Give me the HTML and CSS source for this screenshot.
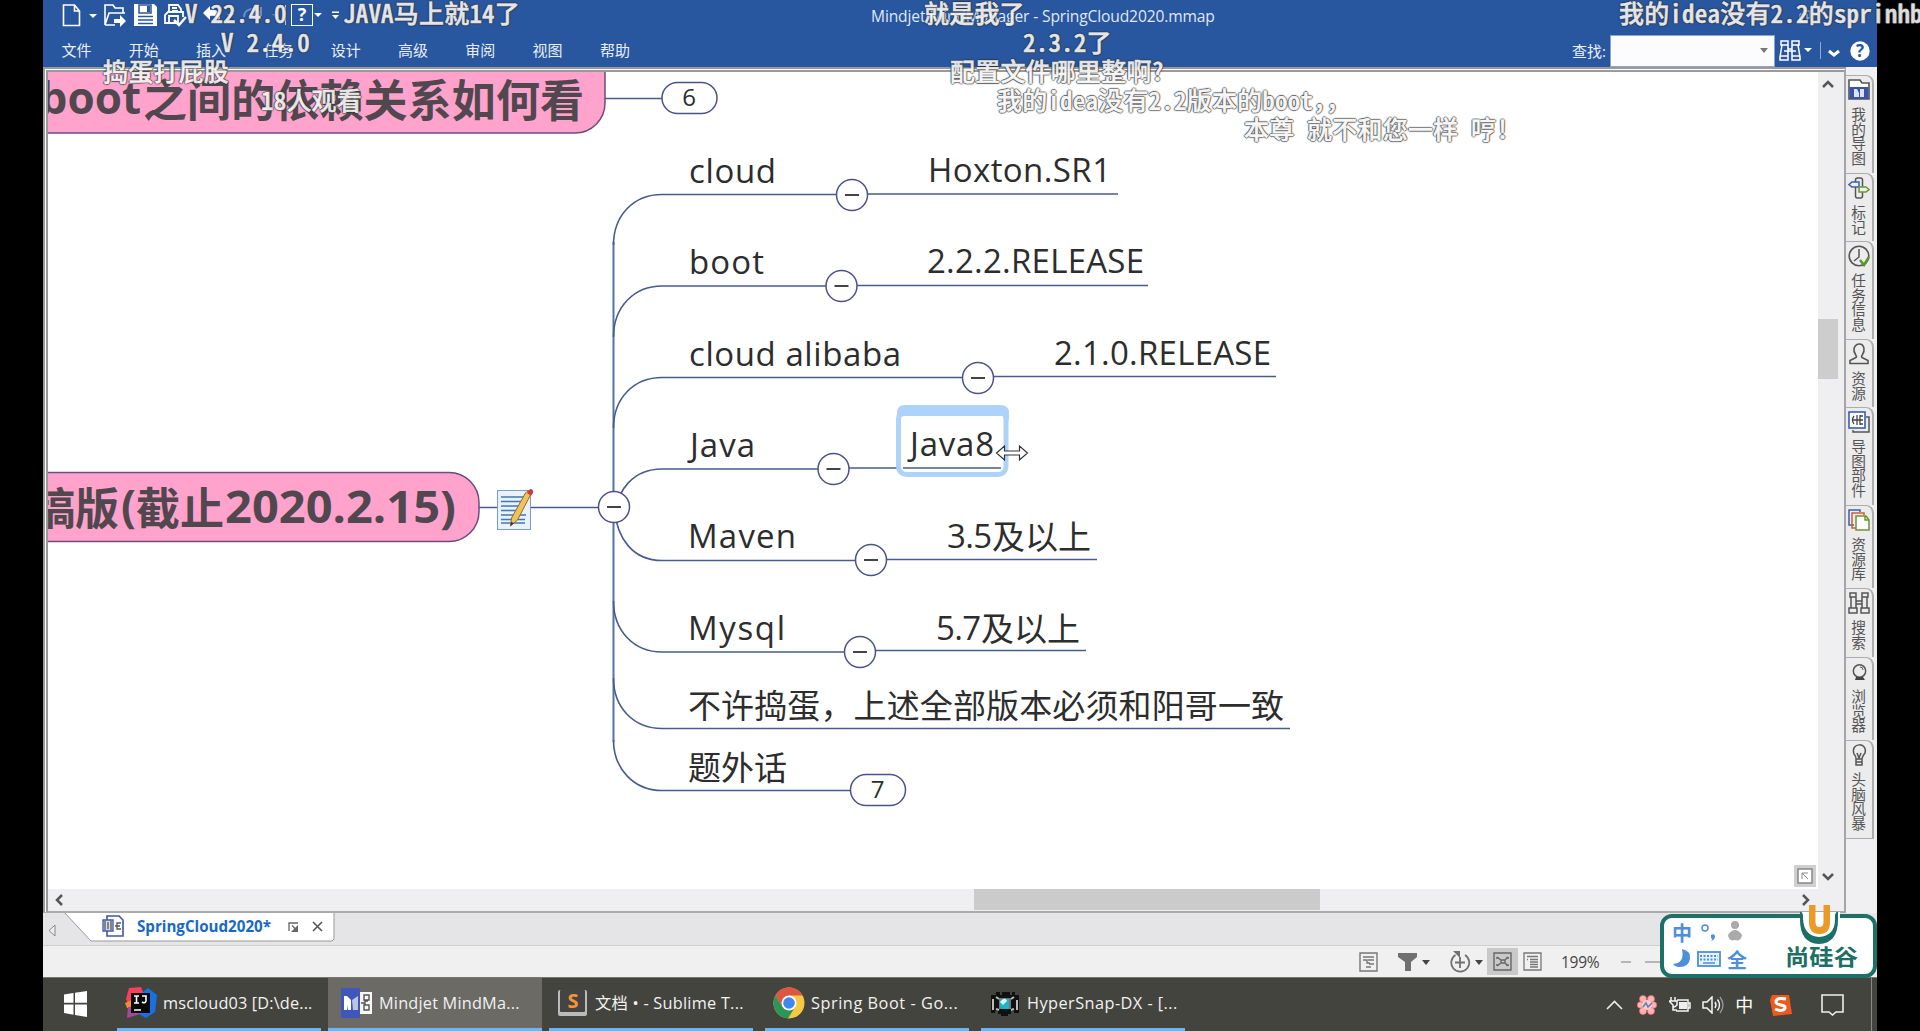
FILE: index.html
```html
<!DOCTYPE html>
<html lang="zh-CN">
<head>
<meta charset="utf-8">
<title>SpringCloud2020.mmap</title>
<link rel="stylesheet" href="styles.css">
</head>
<body>
<div class="screen">
<div class="app">
  <header class="ribbon">
    <div class="titlebar">
      <div class="quick">
        <svg class="q-new" width="36" height="24" viewBox="0 0 36 24"><path d="M1.500 2h11l5 6v14.500h-16zM12.500 2v6h5" fill="none" stroke="#fff" stroke-width="1.600"/><path d="M27 11h8l-4 4z" fill="#fff"/></svg>
        <svg class="q-open" width="24" height="24" viewBox="0 0 24 24"><path d="M1 22V2h8l2 3h8v5M1 22l4-12h16M1 22h10" fill="none" stroke="#fff" stroke-width="1.600"/><path d="M10 16h6v-4l6 6-6 6v-4h-6z" fill="#fff"/></svg>
        <svg class="q-save" width="23" height="24" viewBox="0 0 23 24"><path d="M0 1h20l3 3v19H0z" fill="#fff"/><path d="M5 2h12v8H5zM4 13.500h15M4 17h15M4 20.500h15" fill="none" stroke="#28569f" stroke-width="1.500"/><path d="M13 3h3v6h-3z" fill="#28569f"/></svg>
        <svg class="q-print" width="24" height="24" viewBox="0 0 24 24"><path d="M5 9V2h9l3 4v3M1 21V12l3-3h15v5M1 20h8M5 13h9v7H5zM8 5h5M8 8h6" fill="none" stroke="#fff" stroke-width="1.800"/><path d="M10 17l5 5 7-8" fill="none" stroke="#fff" stroke-width="2.500"/></svg>
        <svg class="q-undo" width="82" height="24" viewBox="0 0 82 24"><path d="M1 10l7-7v4c8-1 12 4 9 11-2-5-5-6-9-5v4z" fill="#fff"/><path d="M25 11h7l-3.500 4z" fill="#a9bbd8"/><path d="M42 14c0-9 12-11 17-2M59 4v8h-8" fill="none" stroke="#6f8fc3" stroke-width="2"/><path d="M70 11h7l-3.500 4z" fill="#6f8fc3"/></svg>
        <i class="q-sep"></i>
        <span class="q-help">?</span>
        <svg class="q-more" width="26" height="24" viewBox="0 0 26 24"><path d="M0 10h8l-4 4zM18 12h7l-3.500 4zM18 8.500h7v1.500h-7z" fill="#fff"/></svg>
      </div>
      <div class="title">Mindjet MindManager - SpringCloud2020.mmap</div>
      <svg class="winbtn" width="12" height="12" viewBox="0 0 12 12"><path d="M1 4h7v7H1zM4 4V1h7v7H8" fill="none" stroke="#b8c8e2"/></svg>
    </div>
    <div class="menubar">
      <nav><a>文件</a><a>开始</a><a>插入</a><a>任务</a><a>设计</a><a>高级</a><a>审阅</a><a>视图</a><a>帮助</a></nav>
      <label>查找:</label>
      <div class="search"><svg width="8" height="5"><path d="M0 0h8L4 5z" fill="#777"/></svg></div>
      <svg class="find" width="104" height="24" viewBox="0 0 104 24"><g fill="none" stroke="#fff" stroke-width="1.500"><path d="M3 2h7v4H3zM14 2h7v4h-7zM4 6L2 18v3h8V10h4v11h8v-3L20 6M2 17h8M14 17h8M10 6v5M14 6v5M6 12h12"/></g><path d="M26 9h8l-4 4z" fill="#fff"/><path d="M42.500 3v17" stroke="#8fa9d2"/><path d="M51 12l5 4 5-4" fill="none" stroke="#fff" stroke-width="3"/><circle cx="82" cy="12" r="9.700" fill="#fff"/><text x="82" y="18" text-anchor="middle" class="helpmark">?</text></svg>
    </div>
  </header>

  <main class="work">
    <section class="doc">
      <div class="viewport">
        <svg class="map" width="1770" height="817" viewBox="48 72 1770 817">
          <g class="topic">
            <rect x="-60" y="40" width="665" height="93" rx="30"/>
            <rect x="-60" y="472.500" width="539" height="69" rx="30"/>
          </g>
          <g class="topic-text">
            <text x="141" y="113.500" text-anchor="end" class="latin-b">boot</text>
            <text x="143" y="117" textLength="441">之间的依赖关系如何看</text>
            <text x="31" y="525" textLength="88">稿版</text>
            <text x="121" y="522" class="latin-b">(</text>
            <text x="136" y="525" textLength="88">截止</text>
            <text x="225" y="522.500" class="latin-b" textLength="231" lengthAdjust="spacingAndGlyphs">2020.2.15)</text>
          </g>
          <g class="links">
            <path d="M605 98.500h57M479 507.500h135"/>
            <path class="spine" d="M613.500 242V742"/>
            <path d="M613.500 245C613.500 215 634 194.500 662 194.500H836M868 194H1118"/>
            <path d="M613.500 337C613.500 307 634 286 662 286H826M857 285.500H1148"/>
            <path d="M613.500 428C613.500 398 634 377.500 662 377.500H963M993 376.500H1276"/>
            <path d="M614 520C616 489 634 469 662 469H818M849 468H897M903 468H1001"/>
            <path d="M614 505C616 540 634 560.500 662 560.500H856M887 559.500H1097"/>
            <path d="M613.500 601C613.500 631 634 652 662 652H845M876 650.500H1086"/>
            <path d="M613.500 678C613.500 708 634 728.500 662 728.500H1290"/>
            <path d="M613.500 740C613.500 769 634 790.500 662 790.500H850"/>
          </g>
          <rect x="898.500" y="411" width="107.500" height="63.500" rx="8" fill="none" stroke="#add3fb" stroke-width="5"/>
          <path d="M897 417v-4q0-8 8-8h95q9 0 9 8v8q-1-5-6-5h-98q-5 0-7 5z" fill="#add3fb"/>
          <g class="knobs">
            <circle cx="852" cy="195" r="15.500"/><circle cx="841.500" cy="286" r="15.500"/><circle cx="978" cy="378" r="15.500"/><circle cx="833.500" cy="469" r="15.500"/><circle cx="871" cy="560" r="15.500"/><circle cx="860" cy="652" r="15.500"/><circle cx="614" cy="507" r="15.500"/>
            <rect x="662" y="82.500" width="55" height="31" rx="15.500"/><rect x="850.500" y="774.500" width="55" height="31" rx="15.500"/>
          </g>
          <path class="minus" d="M845 195h14M834.500 286h14M971 378h14M826.500 469h14M864 560h14M853 652h14M607 507h14"/>
          <g class="label">
            <text x="689" y="182.500" textLength="87">cloud</text><text x="928" y="181.500" textLength="183">Hoxton.SR1</text>
            <text x="689" y="274" textLength="75">boot</text><text x="927" y="273" textLength="217">2.2.2.RELEASE</text>
            <text x="689" y="365.500" textLength="212">cloud alibaba</text><text x="1054" y="364.500" textLength="217">2.1.0.RELEASE</text>
            <text x="690" y="457" textLength="65">Java</text><text x="910" y="456" textLength="84">Java8</text>
            <text x="688" y="548" textLength="108">Maven</text><text x="947" y="547.500" textLength="45">3.5</text><text x="992" y="549" textLength="99">及以上</text>
            <text x="688" y="639.500" textLength="97">Mysql</text><text x="936" y="639.500" textLength="45">5.7</text><text x="981" y="640.500" textLength="99">及以上</text>
            <text x="688" y="718" textLength="596">不许捣蛋，上述全部版本必须和阳哥一致</text>
            <text x="688" y="780" textLength="99">题外话</text>
            <text class="count" x="689" y="106" text-anchor="middle">6</text><text class="count" x="877.500" y="798" text-anchor="middle">7</text>
          </g>
          <g><rect x="497.500" y="490.500" width="33" height="39" fill="#e9f1fa" stroke="#7c9cc8"/><path d="M501 497h25M501 501.500h23M501 506h21M501 510.500h20M501 515h25M501 519.500h24M501 523h24" stroke="#3f78b7" stroke-width="1.500"/><path d="M510.500 526l1-8 14-25q3-4 6 0l-14 27z" fill="#f0c25c" stroke="#8f6a2a"/><path d="M527 493l3-4q4 0 3 4l-2 3z" fill="#c6413a"/><path d="M510.500 526l.5-4 3 1z" fill="#333"/></g>
          <path d="M996.500 453l8-7v5h15v-5l8 7-8 7v-5h-15v5z" fill="#fff" stroke="#333" stroke-width="1.200"/>
        </svg>
        <div class="vscroll">
          <svg width="12" height="8" viewBox="0 0 12 8"><path d="M1 7l5-5 5 5" fill="none" stroke="#555" stroke-width="2.500"/></svg>
          <div class="vthumb"></div>
          <svg class="down" width="12" height="8" viewBox="0 0 12 8"><path d="M1 1l5 5 5-5" fill="none" stroke="#555" stroke-width="2.500"/></svg>
        </div>
        <svg class="corner" width="22" height="22" viewBox="0 0 22 22"><path d="M0 0h22v22H0z" fill="#cfcfcf"/><path d="M4 4h14v14H4z" fill="#fff" stroke="#888" stroke-width="1.500"/><path d="M8 14V8h6M8 8l6 6" fill="none" stroke="#888"/></svg>
      </div>
      <div class="hscroll">
        <svg width="8" height="12" viewBox="0 0 8 12"><path d="M7 1L2 6l5 5" fill="none" stroke="#555" stroke-width="2.500"/></svg>
        <div class="hthumb"></div>
        <svg class="hright" width="8" height="12" viewBox="0 0 8 12"><path d="M1 1l5 5-5 5" fill="none" stroke="#555" stroke-width="2.500"/></svg>
      </div>
    </section>
    <aside class="side">
      <div class="stab"><svg viewBox="0 0 22 22"><path d="M1 20V1h11l2 3h7v16z" fill="#fff" stroke="#555" stroke-width="1.600"/><path d="M1.500 8h19v12h-19z" fill="#3c51a8"/><path d="M6 10h3l2 4v4H6zM12 10h4v8h-4z" fill="#dde3f5"/></svg><span>我的导图</span></div>
      <div class="stab"><svg viewBox="0 0 22 22"><rect x="7.500" y="1" width="7" height="20" rx="2" fill="none" stroke="#555" stroke-width="1.500"/><path d="M1 7.500l3-2.500h7v5H4z" fill="#eee" stroke="#3760ae" stroke-width="1.500"/><path d="M21 12.500l-3-2.500h-7v5h7z" fill="#eee" stroke="#6b972f" stroke-width="1.500"/></svg><span>标记</span></div>
      <div class="stab"><svg viewBox="0 0 22 22"><circle cx="11" cy="11" r="9.800" fill="none" stroke="#555" stroke-width="1.600"/><path d="M11 4v8l-5 4" fill="none" stroke="#555" stroke-width="1.500"/><path d="M12 15l4 5 5-8" fill="none" stroke="#5d9428" stroke-width="2.500"/></svg><span>任务信息</span></div>
      <div class="stab"><svg viewBox="0 0 22 22"><path d="M2 20.500v-3l6-3c2-1-3-4-2-9 2-6 9-6 10 0 1 5-4 8-2 9l6 3v3z" fill="none" stroke="#555" stroke-width="1.600"/></svg><span>资源</span></div>
      <div class="stab"><svg viewBox="0 0 22 22"><path d="M5 19v2h16V6h-3" fill="none" stroke="#555" stroke-width="1.500"/><rect x="1" y="1" width="16" height="16" fill="#fff" stroke="#3760ae" stroke-width="1.600"/><path d="M9 4v10M12 4v10M6 5q-3 4 0 8M12 5h3M12 9h3M12 13h3M5 9h7" fill="none" stroke="#444" stroke-width="1.300"/></svg><span>导图部件</span></div>
      <div class="stab"><svg viewBox="0 0 22 22"><path d="M6 16H1V1h11v2" fill="none" stroke="#3760ae" stroke-width="1.500"/><path d="M8 19H4V4h12v2" fill="none" stroke="#d85b37" stroke-width="1.500"/><path d="M8 7h10l3 4v10H8zM17 7v4h4" fill="#fff" stroke="#6b972f" stroke-width="1.500"/></svg><span>资源库</span></div>
      <div class="stab"><svg viewBox="0 0 22 22"><path d="M2 1h6v4H2zM14 1h6v4h-6zM3 5v11M8 5v11M14 5v11M19 5v11M1 16h8v5H1zM13 16h8v5h-8zM8 9h6M8 12h6" fill="none" stroke="#555" stroke-width="1.500"/></svg><span>搜索</span></div>
      <div class="stab"><svg viewBox="0 0 22 22"><circle cx="11.500" cy="10" r="6.200" fill="none" stroke="#555" stroke-width="1.500"/><path d="M12 6q3 0 3 3" fill="none" stroke="#555"/><path d="M8 16h7l2 3H7z" fill="#444"/></svg><span>浏览器</span></div>
      <div class="stab"><svg viewBox="0 0 22 22"><path d="M8 15q0-3-2-5c-4-12 14-12 11-1q-3 4-3 6M8 15h6v6H8zM8 18h6M9 9l2 5 2-5" fill="none" stroke="#555" stroke-width="1.500"/></svg><span>头脑风暴</span></div>
    </aside>
  </main>

  <div class="doctabs">
    <svg class="doctab-shape" width="300" height="32" viewBox="0 0 300 32"><path d="M21 -1L48 28H289L291 26V-1z" fill="#fff" stroke="#999"/><path d="M12 12v11l-6-5.500z" fill="#eee" stroke="#888"/><path d="M64 3h12l4 4v16H64z" fill="#fff" stroke="#4055a6" stroke-width="1.600"/><path d="M60 7h10v11H60z" fill="#d8dcec" stroke="#4055a6" stroke-width="1.300"/><path d="M62 8v9M65 9v7M68 8v9M78 10h-4v6h4M72 13h5" fill="none" stroke="#555" stroke-width="1.300"/><path d="M246 18v-8h9M249 12.500l5 5" fill="none" stroke="#666" stroke-width="1.300"/><path d="M255 12v7h-7z" fill="#666"/><path d="M270 9l9 9M279 9l-9 9" stroke="#555" stroke-width="1.600"/><text x="94" y="19" textLength="134" lengthAdjust="spacingAndGlyphs" class="doctab-name">SpringCloud2020*</text></svg>
  </div>

  <footer class="status">
    <svg width="19" height="20" viewBox="0 0 19 20"><path d="M1 1h17v18H1zM4 5h11M4 8h4v3h3M9 8h6M10 12h5M7 15h5" fill="none" stroke="#777" stroke-width="1.400"/></svg>
    <svg class="s-filter" width="32" height="20" viewBox="0 0 32 20"><path d="M0 1h19v4l-6 5v9H7v-9L0 5z" fill="#707070"/><path d="M24 8h8l-4 5z" fill="#444"/></svg>
    <svg class="s-target" width="33" height="22" viewBox="0 0 33 22"><path d="M5.500 4a9 9 0 1 0 9.500 0M10 6v11M5 11.500h10" fill="none" stroke="#707070" stroke-width="1.800"/><path d="M3 0h7v7z" fill="#707070"/><path d="M25 9h8l-4 5z" fill="#444"/></svg>
    <div class="s-active"><svg width="19" height="19" viewBox="0 0 19 19"><path d="M1 1h17v17H1zM4 5l4 3h4l3-3M4 14l4-3h4l3 3M3 6h3M3 13h3M13 6h3M13 13h3M8 8v3h4V8z" fill="none" stroke="#666" stroke-width="1.400"/></svg></div>
    <svg class="s-list" width="19" height="19" viewBox="0 0 19 19"><path d="M1 1h17v17H1zM4 4.500h11M7 7.500h8M7 10h8M7 12.500h8M7 15h8M4 7.500h1" fill="none" stroke="#777" stroke-width="1.300"/></svg>
    <span class="zoom">199%</span>
    <i class="dash"></i><i class="dash wide"></i>
  </footer>

  <div class="taskbar">
    <svg class="start" width="23" height="26" viewBox="0 0 23 22" preserveAspectRatio="none"><path d="M0 3l9.500-1.300V10H0zM11 1.500L23 0v10H11zM0 11.500h9.500V20L0 18.700zM11 11.500h12V22l-12-1.700z" fill="#fff"/></svg>
    <div class="task t1"><svg width="32" height="32" viewBox="0 0 32 32"><path d="M4 1l12-1 5 12L5 22 1 12z" fill="#f5405e"/><path d="M0 16l9-4v10l-7-1z" fill="#f68b2c"/><path d="M18 5l5-4 9 7-2 17-9 6-9-5z" fill="#1672e3"/><path d="M3 20l-1 11 13-4-4-8z" fill="#a04a9b"/><path d="M6 6h19v20H6z" fill="#080808"/><path d="M9 9h5M11.500 9v7M9 16h5M17 9h4v5q-1 3-4 1M9 23h7" fill="none" stroke="#fff" stroke-width="1.600"/></svg><span>mscloud03 [D:\de...</span></div>
    <div class="task t2 on"><svg width="32" height="32" viewBox="0 0 32 32"><path d="M0 1h19v30H0z" fill="#3e57b8"/><path d="M19 5h12v22H19z" fill="#f7f7fa"/><path d="M3 9h3l4 4v10H7v-5l-1 5H3z" fill="#fff"/><path d="M11 13l6-4v14h-5z" fill="#bdc4df"/><path d="M23 8h5v5h-5zM23 18h5v5h-5zM20 16h4v-2h3M24 16v2" fill="none" stroke="#555" stroke-width="1.400"/></svg><span>Mindjet MindMa...</span></div>
    <div class="task t3"><svg width="32" height="32" viewBox="0 0 32 32"><rect x="1" y="3" width="29" height="26" rx="2" fill="#bbb"/><rect x="3" y="3" width="25" height="22" rx="1" fill="#444"/><text x="16" y="21" text-anchor="middle" class="subl">S</text></svg><span>文档 • - Sublime T...</span></div>
    <div class="task t4"><svg width="32" height="32" viewBox="0 0 32 32"><circle cx="16" cy="16" r="15.500" fill="#f6c944"/><path d="M2.600 8.200A15.500 15.500 0 0 1 29.500 8.500H16L9.500 20z" fill="#df5543"/><path d="M2.600 8.200A15.500 15.500 0 0 0 15 31.500l7-11.500-12.500 0z" fill="#2c9658"/><circle cx="16" cy="16" r="7.500" fill="#fff"/><circle cx="16" cy="16" r="5.800" fill="#4286ef"/></svg><span>Spring Boot - Go...</span></div>
    <div class="task t5"><svg width="32" height="32" viewBox="0 0 32 32"><path d="M2 8h5V5h4v3h2V5h8v3h2V5h3v3h4v18h-5v-2h-3v3h-3v2h-7v-2h-3v-3h-3v2H2z" fill="#111"/><path d="M4 12v11M7 10l3 2M25 10l-3 2M28 13v10M7 22l3 1M25 22l-3 1" stroke="#bbb" stroke-width="2" fill="none"/><path d="M10 11h12v11H10z" fill="#777"/><path d="M11 12h9v10h-7l-2-2z" fill="#19b5cc"/><path d="M11 15q5-6 7-1l-4 4z" fill="#dcfcff"/></svg><span>HyperSnap-DX - [...</span></div>
    <div class="tray">
      <svg width="17" height="10" viewBox="0 0 17 10"><path d="M1 9l7.500-7.500L16 9" fill="none" stroke="#eee" stroke-width="1.600"/></svg>
      <svg width="20" height="20" viewBox="0 0 20 20"><g fill="#ffb4b4" stroke="#e66a6a" stroke-width=".7"><circle cx="6" cy="4" r="3.500"/><circle cx="14" cy="4" r="3.500"/><circle cx="3.500" cy="10" r="3.200"/><circle cx="16.500" cy="10" r="3.200"/><circle cx="6" cy="16" r="3.500"/><circle cx="14" cy="16" r="3.500"/></g><circle cx="10" cy="10" r="5" fill="#ffc9c9"/><path d="M6 12l3-4 2 4 4-4" fill="none" stroke="#4c83c0" stroke-width="1.500"/></svg>
      <svg width="22" height="18" viewBox="0 0 22 18"><path d="M2 1v4M6 1v4M0 5h8v4q-4 4-4 0zM4 9v5h4M8 4h11v11H7M19 7h2v5h-2" fill="none" stroke="#f5f5f5" stroke-width="1.500"/><path d="M10 6h8v7h-8z" fill="#eee"/></svg>
      <svg width="22" height="18" viewBox="0 0 22 18"><path d="M1 6h4l5-5v16l-5-5H1z" fill="none" stroke="#f5f5f5" stroke-width="1.500"/><path d="M13 6q2 3 0 6M15.500 3.500q4 5.500 0 11" fill="none" stroke="#f5f5f5" stroke-width="1.400"/><path d="M18 1q6 8 0 16" fill="none" stroke="#999" stroke-width="1.300"/></svg>
      <span class="lang">中</span>
      <svg width="22" height="22" viewBox="0 0 22 22"><path d="M2 1l17 0 3 19-19 2-3-16z" fill="#ee5a1c"/><path d="M16 5Q6 3 6 8c0 4 10 2 9 6-1 3-6 3-10 1" fill="none" stroke="#fff" stroke-width="3"/></svg>
      <svg width="23" height="22" viewBox="0 0 23 22"><path d="M1 1h21v17h-7l-3.500 3L8 18H1z" fill="none" stroke="#eee" stroke-width="1.600"/></svg>
      <i class="peek"></i>
    </div>
  </div>
</div>

<div class="ime">
  <svg width="217" height="74" viewBox="0 0 217 74">
    <rect x="2" y="12" width="213" height="60" rx="10" fill="#fff" stroke="#1c7065" stroke-width="4"/>
    <path d="M140 8v9q0 24 19 24t21-24V8z" fill="#fff"/><path d="M140 8v8q0 23 19 24 19-1 19-24V8q-2-1-3 3v4q0 17-16 18-15-1-16-18v-4q-1-4-3-3z" fill="#1c7065"/><path d="M149 1v17q0 12 10.500 12T170 18V1h-6.500v17q0 5-4 5t-4-5V1z" fill="#eb9a27"/>
    <g class="ime-b"><text x="12" y="37">中</text><text x="67" y="64">全</text></g>
    <circle cx="45" cy="24" r="3" fill="none" stroke="#4d8fd8" stroke-width="1.500"/><path d="M51 31q3-2 4 1 0 4-4 5 2-2 0-3z" fill="#4d8fd8"/>
    <path d="M22 45q9 2 8 10-2 9-12 8-4-1-5-3 12-1 9-15z" fill="#4d8fd8"/>
    <rect x="38" y="48" width="22" height="14" fill="#e9f3fd" stroke="#4d8fd8" stroke-width="1.800"/><path d="M40 52h18M40 55.500h18" stroke="#4d8fd8" stroke-width="1.800" stroke-dasharray="2 1.500"/><path d="M43 59h12" stroke="#4d8fd8" stroke-width="1.500"/>
    <circle cx="75" cy="21" r="4" fill="#aaa"/><path d="M68 31q7-10 14 0-1 7-7 5-6 2-7-5z" fill="#aaa"/>
    <text x="125" y="61" class="brand" textLength="73" lengthAdjust="spacingAndGlyphs">尚硅谷</text>
  </svg>
</div>

<div class="danmaku">
  <p class="d1">V 22.4.0</p><p class="d2">JAVA马上就14了</p><p class="d3">V 2.4.0</p><p class="d4">捣蛋打屁股</p><p class="d5">18人观看</p>
  <p class="d6">就是我了</p><p class="d7">2.3.2了</p><p class="d8">配置文件哪里整啊?</p><p class="d9">我的idea没有2.2版本的boot<span>，，</span></p><p class="d10">本尊 就不和您一样 哼!</p>
  <p class="d11">我的idea没有2.2的sprinhboot</p>
</div>
</div>
</body>
</html>
```
FILE: styles.css
```css
* { box-sizing: border-box; }
body { margin: 0; background: #000; font-family: "Open Sans", "Noto Sans CJK SC", sans-serif; overflow: hidden; }
svg { display: block; flex: none; }
.screen { position: relative; width: 1920px; height: 1031px; padding: 0 43px; overflow: hidden; }
.app { display: flex; flex-direction: column; height: 1031px; background: #f0f0f0; }

/* ribbon */
.ribbon { height: 67px; background: #28569f; color: #fff; flex: none; }
.titlebar { display: flex; height: 34px; align-items: flex-start; }
.quick { display: flex; align-items: center; width: 828px; padding: 3px 0 0 19px; }
.q-open { margin-left: 6px; }
.q-save { margin-left: 6px; }
.q-print { margin-left: 7px; }
.q-undo { margin-left: 14px; }
.q-sep { width: 1px; height: 20px; margin-left: 1px; background: #b8c8e2; }
.q-help { width: 22px; height: 22px; margin-left: 5px; border: 1.5px solid #fff; font: bold 18px/19px "Open Sans", sans-serif; text-align: center; }
.q-more { margin-left: 1px; }
.title { width: 343px; font-size: 15.6px; letter-spacing: -.14px; line-height: 32px; white-space: nowrap; color: #dfe8f6; }
.winbtn { margin: 10px 0 0 585px; }
.menubar { display: flex; height: 33px; align-items: center; }
nav { display: flex; width: 1529px; padding-left: 18.500px; }
nav a { width: 67.300px; font-size: 15px; line-height: 33px; color: #e8eefa; }
.menubar label { width: 38px; margin-right: 0; font-size: 15px; color: #e8eefa; white-space: nowrap; }
nav, .menubar label, .search, .find { flex: none; }
.search { display: flex; align-items: center; justify-content: flex-end; width: 165px; height: 32px; padding-right: 6px; background: #fcfcff; border: 1px solid #8aa5cf; }
.find { margin-left: 3px; }
.helpmark { font: bold 17px "Open Sans", sans-serif; fill: #28569f; }

/* workspace */
.work { display: flex; height: 846px; flex: none; }
.doc { width: 1803px; border: solid; border-width: 5px 2px 2px 5px; border-style: double solid solid double; border-color: #9a9a9c #a5a5a8 #aaa #9a9a9c; background: #fff; }
.viewport { position: relative; display: flex; height: 817px; background: #fff; }
.vscroll { display: flex; flex-direction: column; align-items: center; width: 26px; height: 817px; padding: 8px 6px 8px 0; background: #efeef0; }
.vthumb { width: 20px; height: 60px; margin-top: 231px; background: #cdcdcd; }
.down { margin-top: auto; }
.corner { position: absolute; left: 1746px; top: 793px; }
.hscroll { display: flex; align-items: center; height: 22px; padding: 0 0 1px 7px; background: #efeef0; }
.hthumb { width: 346px; height: 21px; margin-left: 911px; background: #cbcbcb; }
.hright { margin-left: 482px; }
.side { width: 31px; padding-top: 8px; background: #f0f0f2; }
.stab { position: relative; width: 28px; padding: 3px 0 7px; border: 1px solid #adadaf; border-width: 1px 2px 0 0; border-top-right-radius: 8px; background: #ececed; }
.stab:last-child { border-bottom-width: 1.500px; }
.stab svg { width: 22px; height: 22px; margin: 0 2px 6px; }
.stab span { display: block; width: 17px; margin-left: 3px; font-size: 14.700px; line-height: 17px; writing-mode: vertical-rl; text-orientation: upright; color: #555; }

/* map */
.topic rect { fill: #ffa3cc; stroke: #6d4b82; stroke-width: 1.500; }
.topic-text { font: bold 44px "Noto Sans CJK SC", sans-serif; fill: #50484e; }
.latin-b { font: bold 44px "Open Sans", sans-serif; }
.links path { fill: none; stroke: #475c8c; stroke-width: 1.600; }
.links .spine { stroke: #5474a8; stroke-width: 2; }
.knobs { fill: #fff; stroke: #4d5188; stroke-width: 1.500; }
.minus { stroke: #444; stroke-width: 2; }
.label { font: 33px "Open Sans", "Noto Sans CJK SC", sans-serif; fill: #2d2d2d; }
.count { font-size: 24px; }

/* document tab and status */
.doctabs { height: 33px; background: #e5e5e7; border-bottom: 1px solid #cfcfcf; flex: none; }
.doctab-name { font: bold 15.500px "Open Sans", sans-serif; fill: #1668c8; }
.status { display: flex; align-items: center; height: 31px; padding-left: 1316px; background: #f0f0f0; flex: none; }
.s-filter { margin-left: 20px; }
.s-target { margin-left: 20px; }
.s-active { display: flex; align-items: center; justify-content: center; width: 31px; height: 27px; margin-left: 4px; background: #c9c9c9; }
.s-list { margin-left: 5px; }
.zoom { width: 60px; margin-left: 19px; font-size: 15.500px; letter-spacing: -.3px; color: #444; }
.dash { width: 10px; height: 2px; background: #b5b5b5; }
.wide { width: 30px; margin-left: 14px; }

/* taskbar */
.taskbar { position: relative; display: flex; height: 54px; background: #44443e; border-top: 1px solid #777770; flex: none; }
.start { margin: 13px 30px 0 21px; }
.task { display: flex; align-items: center; flex: none; width: 204px; height: 53px; margin-right: 12px; padding-left: 8px; border-bottom: 3px solid #72b4ea; color: #f2f2f2; font-size: 16.300px; white-space: nowrap; }
.task span { margin-left: 6px; line-height: 48px; }
.t1 { margin-right: 7px; letter-spacing: .15px; }
.t2 { width: 214px; margin-right: 7px; padding-left: 13px; background: #6b6a65; letter-spacing: .2px; }
.t3 { letter-spacing: .25px; }
.t4 { letter-spacing: .55px; }
.t5 { letter-spacing: .45px; }
.subl { font: bold 20px "Open Sans", sans-serif; fill: #f79433; letter-spacing: 0; }
.tray { display: flex; align-items: center; margin-left: 409px; gap: 11.300px; }
.tray svg:nth-child(1) { margin-right: 3px; }
.lang { width: 18px; font-size: 18px; line-height: 24px; color: #fff; }
.tray .lang + svg { margin: 0 17px 0 6px; }
.peek { width: 1px; height: 53px; margin-left: 16px; background: #888; }

/* floating input bar */
.ime { position: absolute; left: 1660px; top: 904px; }
.ime-b { font: bold 20px "Noto Sans CJK SC", sans-serif; fill: #4d8fd8; }
.brand { font: bold 22px "Noto Sans CJK SC", sans-serif; fill: #1c7065; }

/* live comments drifting over the picture */
.danmaku p { position: absolute; margin: 0; font: 500 25px/28px "Noto Sans CJK SC", sans-serif; font-feature-settings: "hwid"; letter-spacing: .2px; white-space: pre; color: #f6f6f6; opacity: .9; -webkit-text-stroke: .5px #f6f6f6; text-shadow: 1px 0 1px #333, -1px 0 1px #333, 0 1px 1px #333, 0 -1px 1px #333; }
.danmaku span { font-feature-settings: normal; }
.d1 { left: 185px; top: -2px; } .d2 { left: 343px; top: -2px; } .d3 { left: 221px; top: 27px; }
.d4 { left: 103px; top: 56px; } .d5 { left: 261px; top: 85px; }
.d6 { left: 924px; top: -2px; } .d7 { left: 1023px; top: 27px; } .d8 { left: 950px; top: 56px; }
.d9 { left: 997px; top: 85px; } .d10 { left: 1244px; top: 114px; } .d11 { left: 1619px; top: -2px; }
```
